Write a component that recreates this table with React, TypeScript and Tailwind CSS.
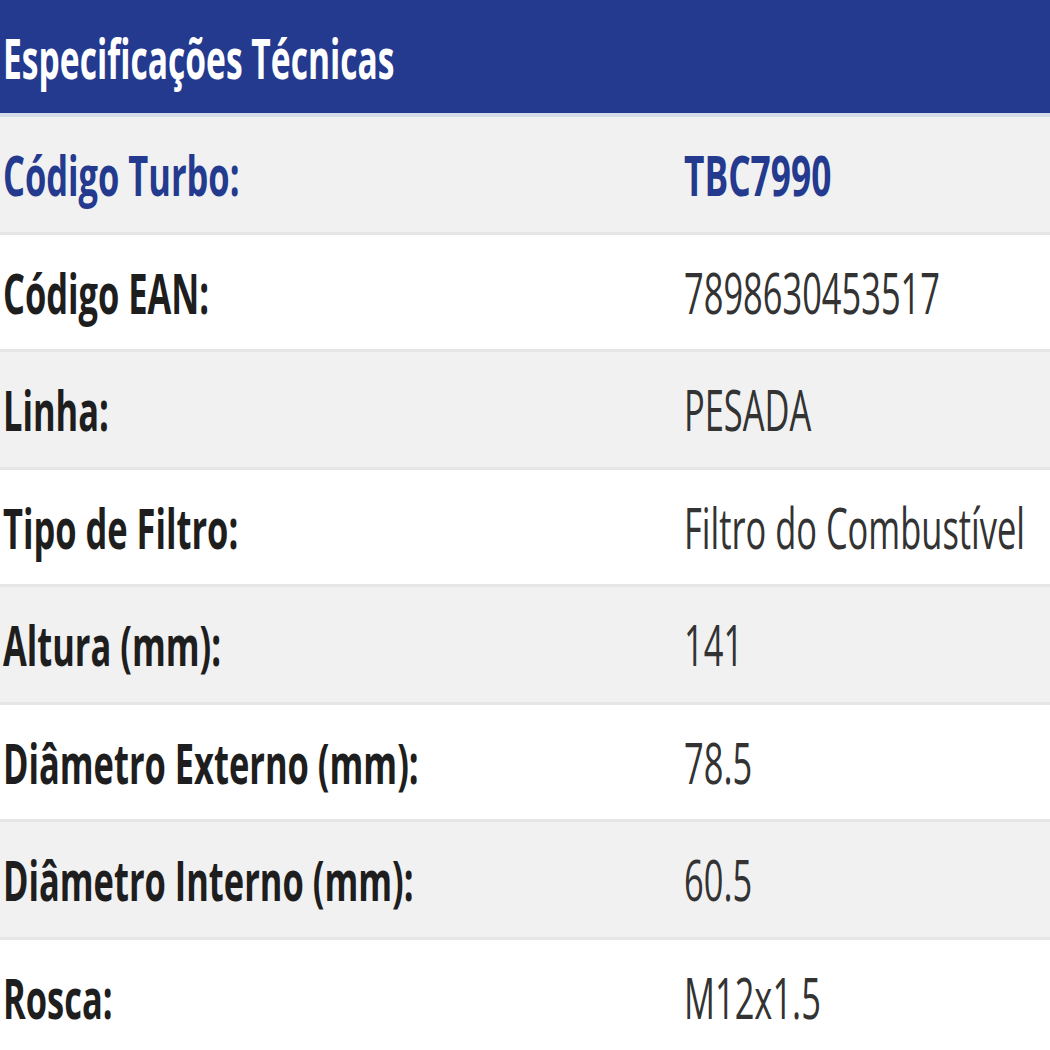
import React from "react";

const rows: { label: string; value: string; highlight?: boolean }[] = [
  { label: "Código Turbo:", value: "TBC7990", highlight: true },
  { label: "Código EAN:", value: "7898630453517" },
  { label: "Linha:", value: "PESADA" },
  { label: "Tipo de Filtro:", value: "Filtro do Combustível" },
  { label: "Altura (mm):", value: "141" },
  { label: "Diâmetro Externo (mm):", value: "78.5" },
  { label: "Diâmetro Interno (mm):", value: "60.5" },
  { label: "Rosca:", value: "M12x1.5" },
];

export default function App() {
  return (
    <div
      className="w-[1050px] h-[1050px] overflow-hidden bg-white"
      style={{ fontFamily: '"Open Sans", "Noto Sans", sans-serif' }}
    >
      <div className="h-[113px] bg-[#233a8f] flex items-center pl-[3px] border-b-[4px] border-[#d6dbe8] box-content">
        <span className="inline-block origin-left scale-x-[0.6] text-[56px] font-bold leading-none text-white whitespace-nowrap">
          Especificações Técnicas
        </span>
      </div>
      {rows.map((r, i) => (
        <div
          key={r.label}
          className={
            "h-[117.5px] grid grid-cols-[684px_1fr] items-center border-b-[3px] border-[#e6e6e6] " +
            (i % 2 === 0 ? "bg-[#f1f1f1]" : "bg-white")
          }
        >
          <div className="pl-[3px] whitespace-nowrap">
            <span
              className={
                "inline-block origin-left scale-x-[0.615] text-[56px] font-bold leading-none " +
                (r.highlight ? "text-[#233a8f]" : "text-[#1e1e1e]")
              }
            >
              {r.label}
            </span>
          </div>
          <div className="whitespace-nowrap">
            <span
              className={
                "inline-block origin-left text-[56px] leading-none " +
                (r.highlight
                  ? "scale-x-[0.63] font-bold text-[#233a8f]"
                  : "scale-x-[0.615] font-normal text-[#333333]")
              }
            >
              {r.value}
            </span>
          </div>
        </div>
      ))}
    </div>
  );
}
